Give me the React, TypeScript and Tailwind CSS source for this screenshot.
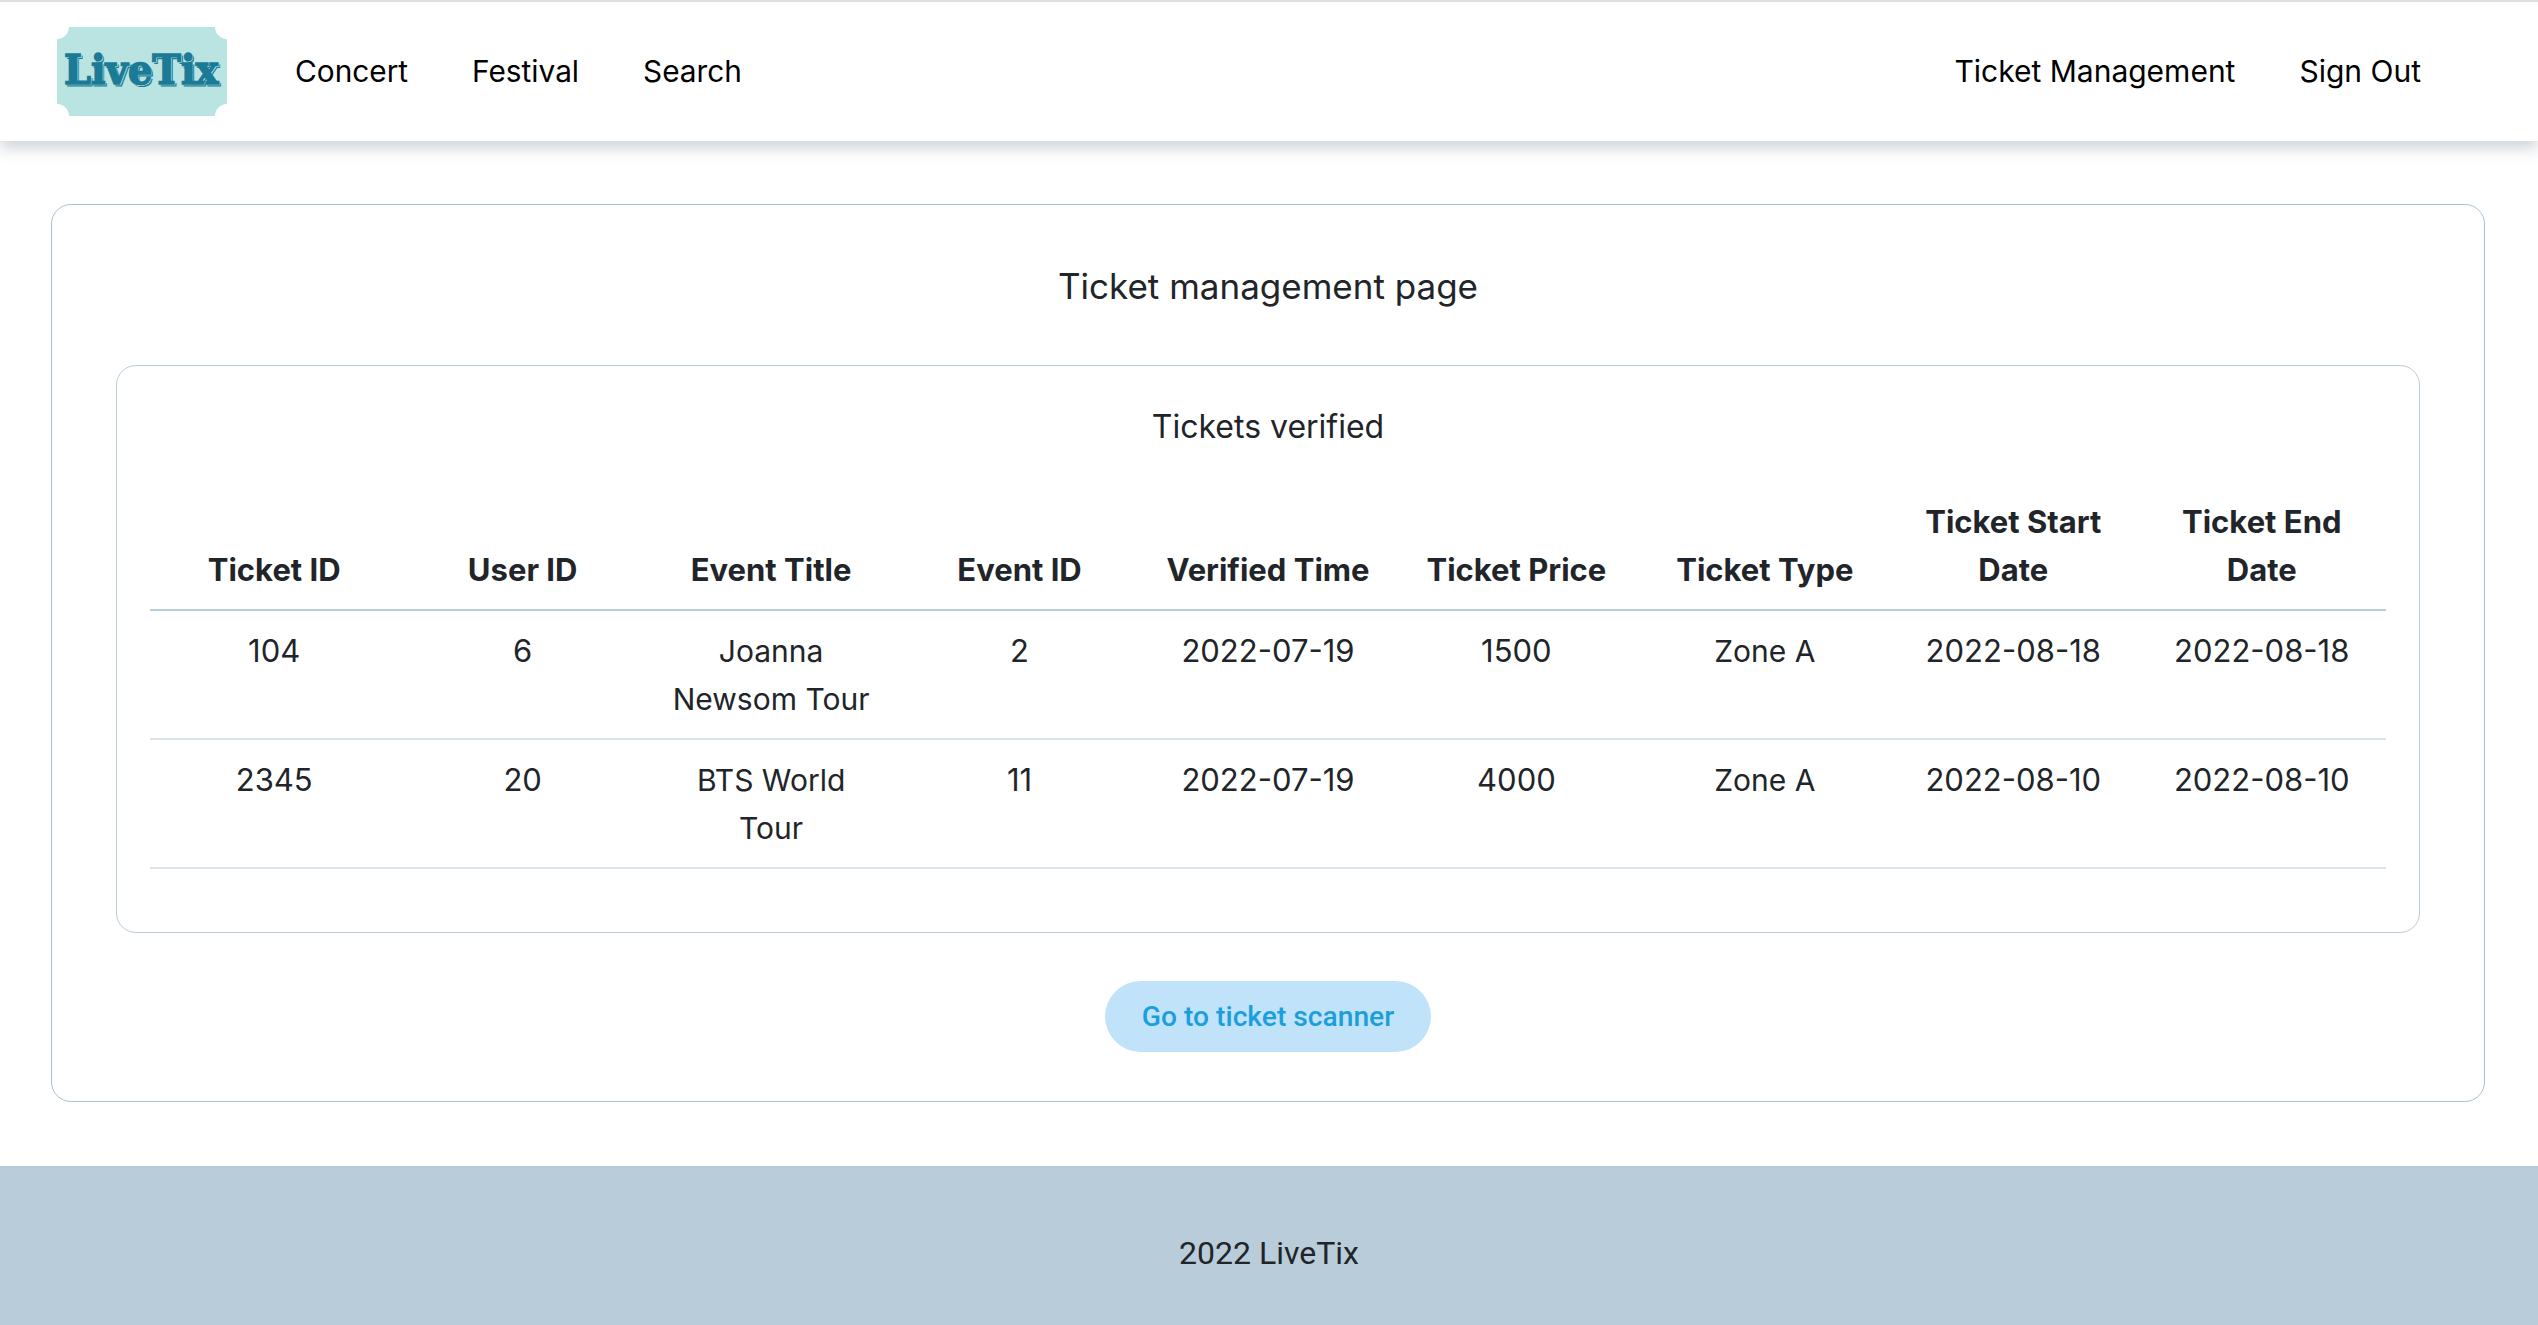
const rows = [
	{ id: '104', user: '6', title: 'Joanna Newsom Tour', event: '2', verified: '2022-07-19', price: '1500', type: 'Zone A', start: '2022-08-18', end: '2022-08-18' },
	{ id: '2345', user: '20', title: 'BTS World Tour', event: '11', verified: '2022-07-19', price: '4000', type: 'Zone A', start: '2022-08-10', end: '2022-08-10' }
];

const columns = ['Ticket ID', 'User ID', 'Event Title', 'Event ID', 'Verified Time', 'Ticket Price', 'Ticket Type', 'Ticket Start Date', 'Ticket End Date'];

function Logo() {
	const letters = { fontFamily: "'DejaVu Serif', serif", fontWeight: 900, fontSize: 34 };
	return (
		<svg width="170" height="89" viewBox="0 0 170 89" className="shrink-0">
			<path d="M12 0H158A12 12 0 0 0 170 12V77A12 12 0 0 0 158 89H12A12 12 0 0 0 0 77V12A12 12 0 0 0 12 0Z" fill="#b9e4e2" />
			<g transform="translate(7 57) scale(1.13 1.22)">
				<text {...letters} x="1.6" y="1.6" fill="#1b7a96" stroke="#1b7a96" strokeWidth="0.8">LiveTix</text>
				<text {...letters} x="0.8" y="0.8" fill="#b9e4e2" stroke="#b9e4e2" strokeWidth="0.6">LiveTix</text>
				<text {...letters} fill="#1b7a96" stroke="#1b7a96" strokeWidth="1.3">LiveTix</text>
			</g>
		</svg>
	);
}

function Header() {
	return (
		<header className="relative z-10 flex h-[141px] items-center border-t-2 border-[#dee0e1] bg-white pl-[57px] pr-[117px] text-[29.8px] leading-[48px] text-black shadow-[0_7px_14px_rgba(90,110,125,0.3)]">
			<Logo />
			<nav className="ml-[68px] flex gap-16 pb-[2px]">
				<a>Concert</a>
				<a>Festival</a>
				<a>Search</a>
			</nav>
			<nav className="ml-auto flex gap-16 pb-[2px] text-[30px]">
				<a>Ticket Management</a>
				<a>Sign Out</a>
			</nav>
		</header>
	);
}

function TicketsTable() {
	return (
		<table className="w-full table-fixed border-collapse text-center">
			<thead>
				<tr className="border-b-2 border-[#b9ccd9]">
					{columns.map((column) => (
						<th key={column} className="px-4 pb-[15px] pt-4 align-bottom font-bold">{column}</th>
					))}
				</tr>
			</thead>
			<tbody>
				{rows.map((row) => (
					<tr key={row.id} className="border-b-2 border-[#dbe3e9]">
						<td className="px-4 pb-[15px] pt-4 align-top">{row.id}</td>
						<td className="px-4 pb-[15px] pt-4 align-top">{row.user}</td>
						<td className="px-4 pb-[15px] pt-4 align-top text-[30px]">{row.title}</td>
						<td className="px-4 pb-[15px] pt-4 align-top">{row.event}</td>
						<td className="px-4 pb-[15px] pt-4 align-top">{row.verified}</td>
						<td className="px-4 pb-[15px] pt-4 align-top">{row.price}</td>
						<td className="px-4 pb-[15px] pt-4 align-top text-[30px]">{row.type}</td>
						<td className="px-4 pb-[15px] pt-4 align-top">{row.start}</td>
						<td className="px-4 pb-[15px] pt-4 align-top">{row.end}</td>
					</tr>
				))}
			</tbody>
		</table>
	);
}

export default function App() {
	return (
		<div className="min-h-[1325px] bg-white font-['Inter',sans-serif] text-[31px] leading-[48px] text-[#212529]">
			<Header />
			<main className="pb-[64px] pl-[51px] pr-[53px] pt-[63px]">
				<section className="rounded-[20px] border border-[#a9c1d1] px-16 pb-[49px] pt-[57px]">
					<h1 className="mb-[55px] text-center text-[35px] leading-[48px]">Ticket management page</h1>
					<div className="rounded-[20px] border border-[#bccbd6] px-[33px] pb-[63px] pt-[34px]">
						<h2 className="mb-[28px] text-center text-[32px] leading-[54px]">Tickets verified</h2>
						<TicketsTable />
					</div>
					<div className="mt-12 flex justify-center">
						<button className="h-[71px] w-[326px] rounded-full bg-[#c0e3f9] font-['Roboto',sans-serif] text-[28.2px] font-medium text-[#1b9fdc]">Go to ticket scanner</button>
					</div>
				</section>
			</main>
			<footer className="flex h-[161px] items-center justify-center bg-[#b9ccd9] pt-3 font-['Roboto',sans-serif] text-[32px]">2022 LiveTix</footer>
		</div>
	);
}
